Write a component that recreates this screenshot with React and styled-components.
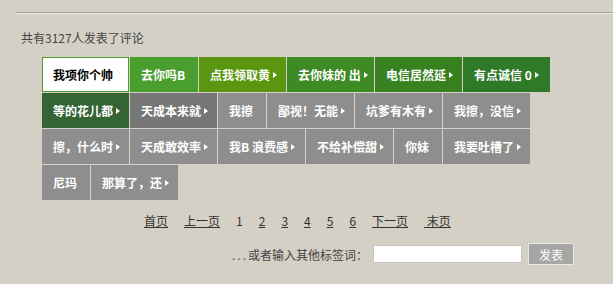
import React from "react";
import styled, { createGlobalStyle } from "styled-components";

const Global = createGlobalStyle`
  html, body { margin: 0; padding: 0; background: #d4d0c5; }
  body { font-family: "Noto Sans CJK SC", "Liberation Sans", sans-serif; font-size: 12px; color: #3a3a3a; }
`;

const Page = styled.div`
  padding-top: 12px;
  width: 613px;
  height: 284px;
  box-sizing: border-box;
  overflow: hidden;
`;

const Rule = styled.div`
  margin-left: 16px;
  height: 0;
  border-top: 1px solid #a29f96;
  border-bottom: 1px solid #f2efe8;
`;

const Count = styled.div`
  margin: 16px 0 0 21px;
  line-height: 16px;
  color: #444;
`;

const Cloud = styled.div`
  margin: 11px 0 0 42px;
  width: 530px;
  display: flex;
  flex-wrap: wrap;
  gap: 1px;
`;

const Tag = styled.a`
  box-sizing: border-box;
  width: ${(p) => p.$w}px;
  height: 35px;
  background: ${(p) => p.$bg};
  color: ${(p) => (p.$active ? "#000" : "#fff")};
  border: ${(p) => (p.$active ? "1px solid #4a9e2e" : "none")};
  padding-left: ${(p) => (p.$active ? 10 : 11)}px;
  display: flex;
  align-items: center;
  font-weight: bold;
  font-size: 12px;
  white-space: nowrap;
  overflow: hidden;
  cursor: pointer;
`;

const Arrow = styled.span`
  display: inline-block;
  width: 0;
  height: 0;
  margin-left: 3px;
  border-top: 3.5px solid transparent;
  border-bottom: 3.5px solid transparent;
  border-left: 4px solid #fff;
`;

const Pager = styled.div`
  margin: 13px 0 0 144px;
  display: flex;
  gap: 16px;
  line-height: 16px;
  color: #333;
`;

const PageLink = styled.a`
  text-decoration: ${(p) => (p.$current ? "none" : "underline")};
  white-space: pre;
  color: #333;
  cursor: pointer;
`;

const FormRow = styled.div`
  margin-top: 14px;
  width: 574px;
  display: flex;
  justify-content: flex-end;
  align-items: center;
`;

const Label = styled.span`
  color: #444;
  font-size: 12px;
  margin-right: 5px;
`;

const Dots = styled.span`
  letter-spacing: 2px;
  color: #666;
`;

const Input = styled.input`
  box-sizing: border-box;
  width: 149px;
  height: 18px;
  border: 1px solid #c6c4be;
  background: #fff;
  padding: 0;
  outline: none;
`;

const Button = styled.button`
  box-sizing: border-box;
  margin-left: 6px;
  width: 46px;
  height: 22px;
  background: #a6a6a6;
  border: 1px solid #e8e7e2;
  color: #fff;
  font-family: "Noto Sans CJK SC", sans-serif;
  font-size: 12px;
  padding: 0;
`;

const L = 87, M = 68, S = 48;
const G = "#8e8e8e";

const tags = [
  { t: "我项你个帅", w: L, bg: "#fff", active: true },
  { t: "去你吗B", w: M, bg: "#4a9e2e" },
  { t: "点我领取黄", w: L, bg: "#5a960f", more: true },
  { t: "去你妹的 出", w: L, bg: "#3e8a24", more: true },
  { t: "电信居然延", w: L, bg: "#37821f", more: true },
  { t: "有点诚信 0", w: L, bg: "#2f7a28", more: true },
  { t: "等的花儿都", w: L, bg: "#346434", more: true },
  { t: "天成本来就", w: L, bg: "#777777", more: true },
  { t: "我擦", w: S, bg: G },
  { t: "鄙视！无能", w: L, bg: G, more: true },
  { t: "坑爹有木有", w: L, bg: G, more: true },
  { t: "我擦，没信", w: L, bg: G, more: true },
  { t: "擦，什么时", w: L, bg: G, more: true },
  { t: "天成敢效率", w: L, bg: G, more: true },
  { t: "我B 浪费感", w: L, bg: G, more: true },
  { t: "不给补偿甜", w: L, bg: G, more: true },
  { t: "你妹", w: S, bg: G },
  { t: "我要吐槽了", w: L, bg: G, more: true },
  { t: "尼玛", w: S, bg: G },
  { t: "那算了，还", w: L, bg: G, more: true },
];

const pages = [
  { t: "首页" },
  { t: "上一页" },
  { t: "1", current: true },
  { t: "2" },
  { t: "3" },
  { t: "4" },
  { t: "5" },
  { t: "6" },
  { t: "下一页" },
  { t: " 末页" },
];

export default function App() {
  return (
    <Page>
      <Global />
      <Rule />
      <Count>共有3127人发表了评论</Count>
      <Cloud>
        {tags.map((g, i) => (
          <Tag key={i} $w={g.w} $bg={g.bg} $active={g.active}>
            {g.t}
            {g.more && <Arrow />}
          </Tag>
        ))}
      </Cloud>
      <Pager>
        {pages.map((p, i) => (
          <PageLink key={i} $current={p.current}>{p.t}</PageLink>
        ))}
      </Pager>
      <FormRow>
        <Label><Dots>...</Dots>或者输入其他标签词：</Label>
        <Input />
        <Button>发表</Button>
      </FormRow>
    </Page>
  );
}
